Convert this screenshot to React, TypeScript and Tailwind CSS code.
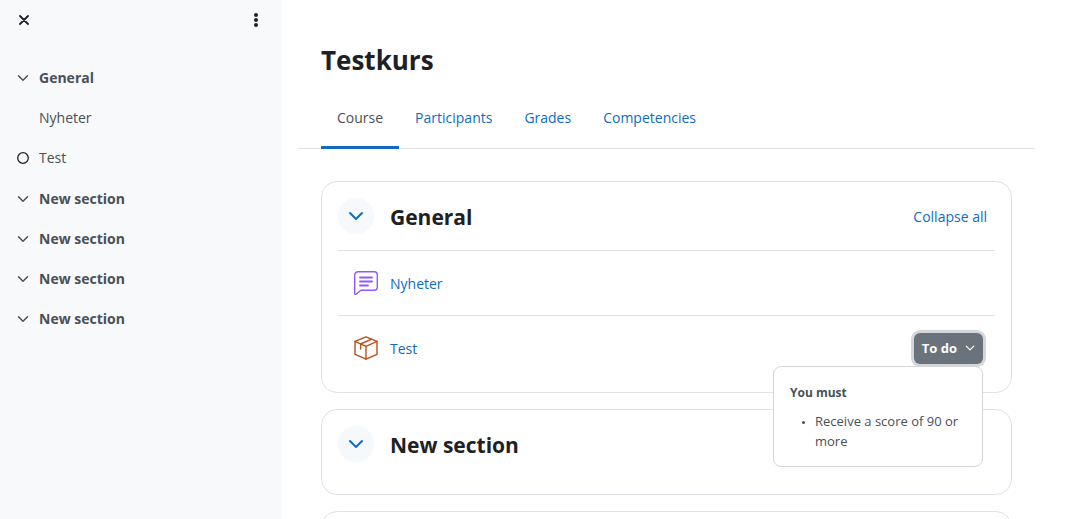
import { useState } from "react";
import type { FC, ReactNode } from "react";

type ChevronProps = { className?: string };

const Chevron: FC<ChevronProps> = ({ className }) => (
  <svg viewBox="0 0 16 16" className={className} fill="none" stroke="currentColor" aria-hidden="true">
    <path d="M2 5 8 11l6-6" strokeWidth="2" strokeLinecap="round" strokeLinejoin="round" />
  </svg>
);

const ForumIcon: FC = () => (
  <svg viewBox="0 0 24 24" className="size-6 text-[#9256ff]" fill="none" stroke="currentColor" aria-hidden="true">
    <path
      d="M4 .7h16.3a3 3 0 0 1 3 3v12.6a3 3 0 0 1-3 3H7L2 23.2A.8.8 0 0 1 .7 22.6V4A3.3 3.3 0 0 1 4 .7Z"
      strokeWidth="1.4"
      strokeLinejoin="round"
    />
    <path d="M6 6.5h12M6 10.5h12M6 14.5h8" strokeWidth="1.8" strokeLinecap="round" />
  </svg>
);

const PackageIcon: FC = () => (
  <svg
    viewBox="0 0 24 24"
    className="size-6 text-[#b9501f]"
    fill="none"
    stroke="currentColor"
    strokeWidth="1.4"
    strokeLinecap="round"
    strokeLinejoin="round"
    aria-hidden="true"
  >
    <path d="M12 .8 23 5.3v13L12 23.2 1 18.3v-13Z" />
    <path d="M1 5.3 12 10.3l11-5M12 10.3v12.9" />
    <path d="M17.6 3.2 6.6 8v5" />
  </svg>
);

const indexSections = ["New section", "New section", "New section", "New section"];
const courseSections = indexSections.slice(0, 2);
const tabs = ["Course", "Participants", "Grades", "Competencies"];

const IndexSection: FC<{ title: string; children?: ReactNode }> = ({ title, children }) => (
  <li className={children ? "mb-px" : ""}>
    <div className="flex h-10 items-center">
      <button type="button" aria-label={`Toggle ${title}`} className="mr-2 flex size-4 items-center justify-center">
        <Chevron className="size-3" />
      </button>
      <a href="#" className="font-bold">
        {title}
      </a>
    </div>
    {children && <ul>{children}</ul>}
  </li>
);

const CourseIndex: FC = () => (
  <nav className="w-[282px] shrink-0 bg-[#f8f9fb] text-[#495057]">
    <div className="flex h-10 items-center justify-between px-4 text-[#1d2125]">
      <button type="button" aria-label="Close course index" className="flex size-4 items-center justify-center">
        <svg viewBox="0 0 10 10" className="size-[10px]" fill="none" stroke="currentColor" aria-hidden="true">
          <path d="m1 1 8 8M9 1 1 9" strokeWidth="1.8" strokeLinecap="round" />
        </svg>
      </button>
      <button type="button" aria-label="Course index options" className="flex w-5 justify-center">
        <svg viewBox="0 0 4 14" className="h-[14px] w-1" fill="currentColor" aria-hidden="true">
          <circle cx="2" cy="2" r="2" />
          <circle cx="2" cy="7" r="2" />
          <circle cx="2" cy="12" r="2" />
        </svg>
      </button>
    </div>
    <ul className="mt-[18px] px-[15px]">
      <IndexSection title="General">
        <li className="flex h-10 items-center">
          <span className="mr-2 size-4" />
          <a href="#">Nyheter</a>
        </li>
        <li className="flex h-10 items-center">
          <span className="mr-2 flex size-4 items-center justify-center">
            <svg viewBox="0 0 12 12" className="size-3 text-[#1d2125]" fill="none" stroke="currentColor" aria-hidden="true">
              <circle cx="6" cy="6" r="5.3" strokeWidth="1.3" />
            </svg>
          </span>
          <a href="#">Test</a>
        </li>
      </IndexSection>
      {indexSections.map((title, i) => (
        <IndexSection key={i} title={title} />
      ))}
    </ul>
  </nav>
);

type SectionCardProps = { title: string; action?: ReactNode; children?: ReactNode };

const SectionCard: FC<SectionCardProps> = ({ title, action, children }) => (
  <li className="rounded-2xl border border-[#dee2e6] px-4 pt-4">
    <div className="flex items-center pb-4">
      <button
        type="button"
        aria-label={`Collapse ${title}`}
        className="mr-4 flex size-9 items-center justify-center rounded-full bg-[#f5f9fc] text-[#0f6cbf]"
      >
        <Chevron className="size-4" />
      </button>
      <h2 className="pt-0.5 text-[21px] leading-8 font-bold text-[#1d2125]">{title}</h2>
      {action}
    </div>
    {children ? <ul className="pb-3">{children}</ul> : <div className="h-4" />}
  </li>
);

const Activity: FC<{ name: string; icon: ReactNode; children?: ReactNode }> = ({ name, icon, children }) => (
  <li className="flex h-[65px] items-center border-t border-[#dee2e6] pr-3 pl-4">
    {icon}
    <a href="#" className="ml-3 pt-0.5 text-[#0f6cbf]">
      {name}
    </a>
    {children}
  </li>
);

const CompletionMenu: FC = () => {
  const [isOpen, setIsOpen] = useState(true);

  return (
    <div className="relative ml-auto">
      <button
        type="button"
        aria-expanded={isOpen}
        onClick={() => setIsOpen(!isOpen)}
        className="flex h-[31px] items-center gap-2 rounded-md bg-[#6a737b] px-2 text-[13px] font-bold text-white ring-3 ring-[#d3d7db]"
      >
        To do
        <Chevron className="size-[10px]" />
      </button>
      {isOpen && (
        <div className="absolute top-full right-0 z-10 mt-0.5 w-[210px] rounded-lg border border-[#d5d6d7] bg-white px-4 pt-4 pb-[15px] text-[#495057]">
          <strong className="block text-[12px] leading-5">You must</strong>
          <ul className="mt-2 pl-3 text-[13px] leading-5">
            <li className="flex">
              <span className="mt-[10px] mr-[10px] size-[3px] shrink-0 rounded-full bg-[#495057]" />
              Receive a score of 90 or more
            </li>
          </ul>
        </div>
      )}
    </div>
  );
};

export default function App() {
  return (
    <div className="flex h-screen bg-white font-['Open_Sans','Noto_Sans',sans-serif] text-[14px] leading-6">
      <CourseIndex />
      <main className="min-w-0 grow overflow-y-auto pr-[46px] pb-8 pl-4 [scrollbar-width:none]">
        <h1 className="px-[23px] pt-10 text-[26px] leading-10 font-bold text-[#1d2125]">Testkurs</h1>
        <nav className="mt-2 flex border-b border-[#dee2e6] px-[23px]">
          {tabs.map((tab, i) => (
            <a
              key={tab}
              href="#"
              className={
                i === 0
                  ? "-mb-px flex h-[61px] items-center border-b-3 border-[#0f6cbf] px-4 pt-0.5 text-[#495057]"
                  : "flex h-[60px] items-center border-b-2 border-transparent px-4 pt-0.5 text-[#0f6cbf]"
              }
            >
              {tab}
            </a>
          ))}
        </nav>
        <ul className="mt-8 space-y-4 px-[23px]">
          <SectionCard
            title="General"
            action={
              <a href="#" className="mr-2 ml-auto pt-0.5 text-[#0f6cbf]">
                Collapse all
              </a>
            }
          >
            <Activity name="Nyheter" icon={<ForumIcon />} />
            <Activity name="Test" icon={<PackageIcon />}>
              <CompletionMenu />
            </Activity>
          </SectionCard>
          {courseSections.map((title, i) => (
            <SectionCard key={i} title={title} />
          ))}
        </ul>
      </main>
    </div>
  );
}
